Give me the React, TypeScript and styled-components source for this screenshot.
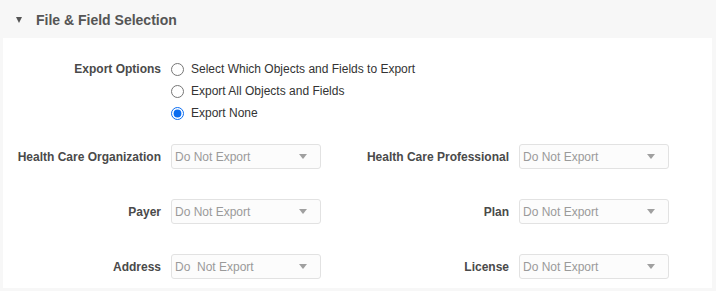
import React from 'react';
import styled, { createGlobalStyle } from 'styled-components';

const GlobalStyle = createGlobalStyle`
  html, body {
    margin: 0;
    padding: 0;
    background: #f7f7f7;
    font-family: "Liberation Sans", Arial, Helvetica, sans-serif;
  }
`;

const fields = [
  { left: 'Health Care Organization', leftValue: 'Do Not Export', right: 'Health Care Professional', rightValue: 'Do Not Export' },
  { left: 'Payer', leftValue: 'Do Not Export', right: 'Plan', rightValue: 'Do Not Export' },
  { left: 'Address', leftValue: 'Do  Not Export', right: 'License', rightValue: 'Do Not Export' },
];

const exportOptions = [
  'Select Which Objects and Fields to Export',
  'Export All Objects and Fields',
  'Export None',
];

const Dropdown = ({ value }: { value: string }) => (
  <SelectBox>
    <SelectText>{value}</SelectText>
    <Caret />
  </SelectBox>
);

const App = () => {
  return (
    <Page>
      <GlobalStyle />
      <Header>
        <Toggle />
        <Title>File &amp; Field Selection</Title>
      </Header>

      <Body>
        <OptionsRow>
          <Label>Export Options</Label>
          <RadioList>
            {exportOptions.map((opt, i) => (
              <RadioRow key={opt}>
                <Radio type="radio" name="exportOption" defaultChecked={i === 2} />
                <RadioText>{opt}</RadioText>
              </RadioRow>
            ))}
          </RadioList>
        </OptionsRow>

        <FieldGrid>
          {fields.map((row) => (
            <React.Fragment key={row.left}>
              <Label>{row.left}</Label>
              <Dropdown value={row.leftValue} />
              <Label>{row.right}</Label>
              <Dropdown value={row.rightValue} />
            </React.Fragment>
          ))}
        </FieldGrid>
      </Body>
    </Page>
  );
};

const Page = styled.div`
  width: 716px;
  height: 291px;
  background: #f7f7f7;
  box-sizing: border-box;
  padding: 0 4px 4px 3px;
  display: flex;
  flex-direction: column;
`;

const Header = styled.div`
  height: 38px;
  display: flex;
  align-items: center;
  gap: 14px;
  padding-left: 13px;
  flex-shrink: 0;
`;

const Toggle = styled.span`
  width: 0;
  height: 0;
  border-left: 3.5px solid transparent;
  border-right: 3.5px solid transparent;
  border-top: 6px solid #555;
  margin-top: 1px;
`;

const Title = styled.h2`
  margin: 0;
  font-size: 14px;
  font-weight: bold;
  color: #555;
  padding-top: 2px;
`;

const Body = styled.div`
  flex: 1;
  background: #fff;
  padding: 20px 0 9px;
`;

const OptionsRow = styled.div`
  display: grid;
  grid-template-columns: 158px 1fr;
  column-gap: 10px;
  align-items: start;
`;

const Label = styled.label`
  text-align: right;
  font-size: 12px;
  font-weight: bold;
  color: #4a4a4a;
  line-height: 22px;
  white-space: nowrap;
`;

const RadioList = styled.div`
  display: flex;
  flex-direction: column;
`;

const RadioRow = styled.label`
  display: flex;
  align-items: center;
  height: 22px;
  gap: 7px;
`;

const Radio = styled.input`
  width: 13px;
  height: 13px;
  margin: 0;
  accent-color: #0a6cf0;
`;

const RadioText = styled.span`
  font-size: 12px;
  color: #333;
`;

const FieldGrid = styled.div`
  display: grid;
  grid-template-columns: 158px 150px 178px 150px;
  column-gap: 10px;
  row-gap: 30px;
  align-items: center;
  margin-top: 20px;
`;

const SelectBox = styled.div`
  position: relative;
  height: 25px;
  box-sizing: border-box;
  border: 1px solid #e2e2e2;
  border-radius: 3px;
  background: #fcfcfc;
  display: flex;
  align-items: center;
  padding: 0 5px 0 3px;
`;

const SelectText = styled.span`
  flex: 1;
  font-size: 12px;
  color: #9a9a9a;
  white-space: pre;
`;

const Caret = styled.span`
  width: 0;
  height: 0;
  border-left: 4px solid transparent;
  border-right: 4px solid transparent;
  border-top: 5px solid #a0a0a0;
  margin-right: 8px;
`;

export default App;
